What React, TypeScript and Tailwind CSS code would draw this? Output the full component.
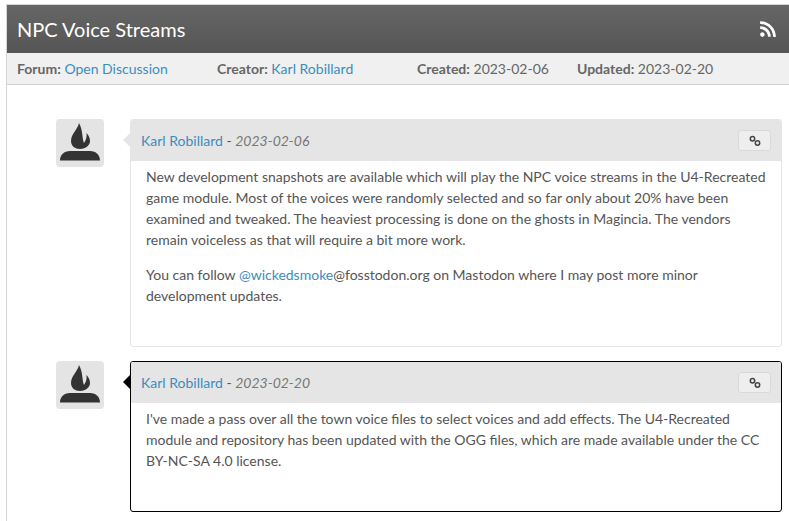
import { FaRss } from 'react-icons/fa'
import type { ReactNode } from 'react'

type Post = {
  date: string
  selected?: boolean
  body: ReactNode
  height: string
}

const posts: Post[] = [
  {
    date: '2023-02-06',
    height: 'h-[228px]',
    body: (
      <>
        <p>
          New development snapshots are available which will play the NPC voice streams in the U4-Recreated
          game module. Most of the voices were randomly selected and so far only about 20% have been
          examined and tweaked. The heaviest processing is done on the ghosts in Magincia. The vendors
          remain voiceless as that will require a bit more work.
        </p>
        <p className="mt-[14px]">
          You can follow <a className="text-[#3c8dbc]">@wickedsmoke</a>@fosstodon.org on Mastodon where I may post more minor
          development updates.
        </p>
      </>
    ),
  },
  {
    date: '2023-02-20',
    selected: true,
    height: 'h-[151px]',
    body: (
      <p>
        I've made a pass over all the town voice files to select voices and add effects. The U4-Recreated
        module and repository has been updated with the OGG files, which are made available under the CC
        BY-NC-SA 4.0 license.
      </p>
    ),
  },
]

function Avatar() {
  return (
    <div className="h-12 w-12 shrink-0 rounded bg-[#e4e4e4]">
      <svg viewBox="0 0 48 48" className="h-12 w-12 text-[#333333]">
        <path
          fill="currentColor"
          d="M23 4C22 10 15 15 15 22C15 27 19 30 24 30C30 30 34 26 34 22C34 19 33 17 30.500 14C31 18 30 21 28 24C26 20 27 11 23 4ZM4 41.500C4 36 8 32 14 32H34C40 32 44 36 44 41.500Z"
        />
      </svg>
    </div>
  )
}

function LinkIcon() {
  return (
    <svg viewBox="0 0 14 12" className="h-3 w-[14px] text-[#444444]" fill="none" stroke="currentColor" strokeWidth="1.5">
      <circle cx="4.500" cy="3.800" r="2.200" />
      <circle cx="9.500" cy="8" r="2.200" />
    </svg>
  )
}

function PostCard({ post }: { post: Post }) {
  return (
    <div className="flex">
      <Avatar />
      <div
        className={`relative ml-[26px] w-[652px] rounded-[3px] border bg-white ${post.height} ${
          post.selected ? 'border-black' : 'border-[#e5e5e5]'
        }`}
      >
        <span
          className={`absolute -left-[8px] top-[12px] h-0 w-0 border-y-[8px] border-r-[8px] border-y-transparent ${
            post.selected ? 'border-r-black' : 'border-r-[#e5e5e5]'
          }`}
        />
        <div className="flex h-[41px] items-center justify-between rounded-t-[2px] bg-[#e5e5e5] pl-[10px] pr-[10px]">
          <div className="text-sm text-[#555555]">
            <a className="text-[#3c8dbc]">Karl Robillard</a> - <em className="text-[#777777]">{post.date}</em>
          </div>
          <button className="flex h-[21px] w-[33px] items-center justify-center rounded-[3px] border border-[#d9d9d9] bg-[#eeeeee]">
            <LinkIcon />
          </button>
        </div>
        <div className="px-[15px] pt-[5px] text-sm leading-[21px] text-[#555555]">{post.body}</div>
      </div>
    </div>
  )
}

export default function App() {
  return (
    <div className="h-[521px] overflow-hidden bg-white pl-[6px] pt-1 font-['Lato','Open_Sans',sans-serif]">
      <div className="h-full border-l border-t border-[#d6d6d6]">
        <header className="flex h-12 items-center justify-between bg-gradient-to-b from-[#666666] to-[#555555] pl-[10px] pr-[12px] text-white">
          <h1 className="text-xl">NPC Voice Streams</h1>
          <FaRss size={18} />
        </header>
        <div className="flex h-8 items-center border-b border-[#d0d0d0] bg-[#f0f0f0] pl-[10px] text-sm text-[#666666]">
          <div className="w-[200px]">
            <b>Forum:</b> <a className="text-[#3c8dbc]">Open Discussion</a>
          </div>
          <div className="w-[200px]">
            <b>Creator:</b> <a className="text-[#3c8dbc]">Karl Robillard</a>
          </div>
          <div className="w-[160px]">
            <b>Created:</b> 2023-02-06
          </div>
          <div>
            <b>Updated:</b> 2023-02-20
          </div>
        </div>
        <div className="flex flex-col gap-[14px] pl-[49px] pt-[34px]">
          {posts.map((post) => (
            <PostCard key={post.date} post={post} />
          ))}
        </div>
      </div>
    </div>
  )
}
